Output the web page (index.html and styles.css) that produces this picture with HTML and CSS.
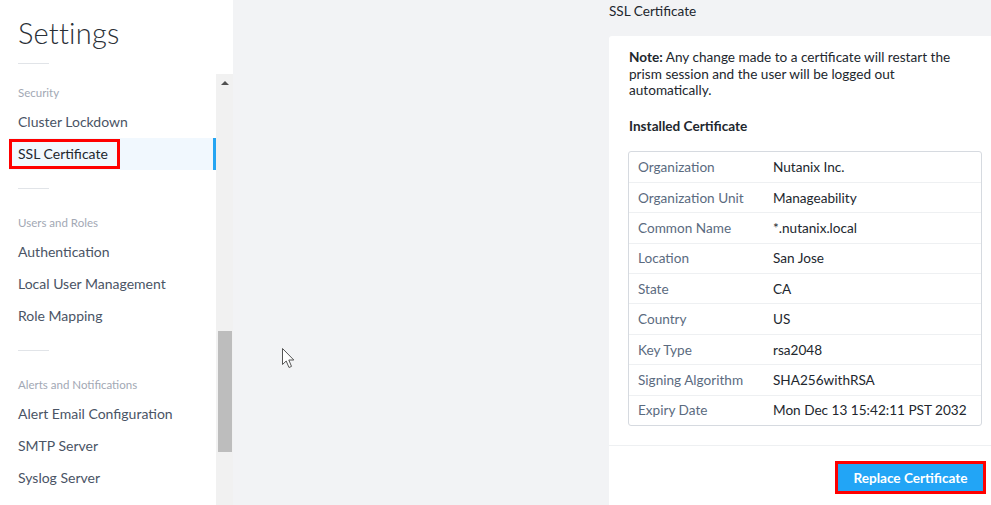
FILE: index.html
```html
<!DOCTYPE html>
<html>
<head>
<meta charset="utf-8">
<link rel="stylesheet" href="styles.css">
</head>
<body>
<div class="app">
  <aside class="sidebar">
    <div class="side-head">
      <h1 class="side-title">Settings</h1>
      <div class="rule"></div>
    </div>
    <div class="side-body">
      <nav class="side-list">
        <div class="group">
          <div class="group-label">Security</div>
          <a class="item">Cluster Lockdown</a>
          <a class="item selected"><span class="annot">SSL Certificate</span></a>
        </div>
        <div class="rule gap"></div>
        <div class="group">
          <div class="group-label">Users and Roles</div>
          <a class="item">Authentication</a>
          <a class="item">Local User Management</a>
          <a class="item">Role Mapping</a>
        </div>
        <div class="rule gap"></div>
        <div class="group">
          <div class="group-label">Alerts and Notifications</div>
          <a class="item">Alert Email Configuration</a>
          <a class="item">SMTP Server</a>
          <a class="item">Syslog Server</a>
        </div>
      </nav>
      <div class="scrollbar">
        <div class="sb-arrow"></div>
        <div class="sb-thumb"></div>
      </div>
    </div>
  </aside>
  <main class="main">
    <section class="content">
      <div class="page-title">SSL Certificate</div>
      <div class="card">
        <div class="card-body">
          <p class="note"><b>Note:</b> Any change made to a certificate will restart the prism session and the user will be logged out automatically.</p>
          <div class="sub-title">Installed Certificate</div>
          <div class="cert-table">
            <div class="row"><span class="k">Organization</span><span class="v">Nutanix Inc.</span></div>
            <div class="row"><span class="k">Organization Unit</span><span class="v">Manageability</span></div>
            <div class="row"><span class="k">Common Name</span><span class="v">*.nutanix.local</span></div>
            <div class="row"><span class="k">Location</span><span class="v">San Jose</span></div>
            <div class="row"><span class="k">State</span><span class="v">CA</span></div>
            <div class="row"><span class="k">Country</span><span class="v">US</span></div>
            <div class="row"><span class="k">Key Type</span><span class="v">rsa2048</span></div>
            <div class="row"><span class="k">Signing Algorithm</span><span class="v">SHA256withRSA</span></div>
            <div class="row"><span class="k">Expiry Date</span><span class="v">Mon Dec 13 15:42:11 PST 2032</span></div>
          </div>
        </div>
        <div class="card-foot">
          <button class="btn-primary">Replace Certificate</button>
        </div>
      </div>
    </section>
  </main>
  <svg class="cursor" width="14" height="21" viewBox="0 0 14 21"><path d="M0.5 0.5 L0.5 16.5 L4.2 13 L7 19.5 L9.5 18.4 L6.8 12 L11.8 12 Z" fill="#fff" stroke="#555" stroke-width="1"/></svg>
</div>
</body>
</html>
```
FILE: styles.css
```css
* { box-sizing: border-box; margin: 0; padding: 0; }
html, body { width: 991px; height: 505px; overflow: hidden; }
body {
  font-family: "Lato", "Open Sans", sans-serif;
  background: #f2f3f5;
  color: #22272e;
}
.app { display: flex; height: 505px; position: relative; }

.sidebar {
  width: 233px;
  background: #fff;
  display: flex;
  flex-direction: column;
  flex-shrink: 0;
}
.side-head { height: 74px; padding: 16px 0 0 18px; }
.side-title {
  font-size: 29px;
  font-weight: 300;
  line-height: 34px;
  color: #2a2f36;
  letter-spacing: 0.2px;
}
.rule { width: 31px; height: 1px; background: #e1e4e8; }
.side-head .rule { margin-top: 13px; }
.side-body { flex: 1; display: flex; min-height: 0; }
.side-list { width: 216px; padding-top: 11px; overflow: hidden; }
.rule.gap { margin: 18px 0 26px 18px; }
.group-label {
  height: 16px;
  line-height: 16px;
  font-size: 11.5px;
  color: #a2a8b4;
  padding-left: 18px;
  margin-bottom: 5px;
}
.item {
  display: block;
  height: 32px;
  line-height: 32px;
  font-size: 14px;
  color: #4a5465;
  padding-left: 18px;
}
.item.selected {
  margin-left: 9px;
  padding-left: 9px;
  background: #f1f8fe;
  border-right: 3px solid #26a5f2;
  color: #22272e;
}
.annot {
  display: inline-block;
  line-height: 24px;
  padding: 0 9px 0 6px;
  margin-left: -6px;
  margin-top: 4px;
  outline: 3px solid #f00;
  vertical-align: top;
}
.scrollbar { width: 17px; background: #f1f1f1; position: relative; }
.sb-arrow {
  width: 0; height: 0;
  margin: 7px auto 0;
  border-left: 4px solid transparent;
  border-right: 4px solid transparent;
  border-bottom: 4px solid #505050;
}
.sb-thumb {
  margin: 246px 1px 0 2px;
  height: 121px;
  background: #bdbdbd;
}

.main { flex: 1; display: flex; justify-content: flex-end; }
.content { width: 382px; display: flex; flex-direction: column; }
.page-title { font-size: 13.6px; line-height: 23px; height: 36px; color: #22272e; }
.card {
  flex: 1;
  background: #fff;
  border-top-left-radius: 3px;
  display: flex;
  flex-direction: column;
}
.card-body { padding: 13px 9px 19px 20px; border-bottom: 1px solid #eef0f2; }
.note { font-size: 13.6px; line-height: 16.5px; width: 345px; }
.note b { font-weight: 700; }
.sub-title { font-weight: 700; font-size: 13.6px; margin-top: 19px; line-height: 16px; margin-bottom: 17px; }
.cert-table {
  border: 1px solid #d6dae0;
  border-radius: 3px;
  margin-left: -1px;
}
.row {
  display: flex;
  height: 30.4px;
  align-items: center;
  font-size: 13.6px;
  border-top: 1px solid #eef0f2;
}
.row:first-child { border-top: none; }
.k { width: 144px; padding-left: 9px; color: #5b6b80; }
.v { color: #22272e; }
.card-foot { display: flex; justify-content: flex-end; padding: 18px 8px 0 0; }
.btn-primary {
  font-family: inherit;
  width: 145px;
  height: 27px;
  background: #22a5f6;
  border: none;
  color: #fff;
  font-size: 13.6px;
  font-weight: 700;
  outline: 3px solid #f00;
}
.cursor { position: absolute; left: 282px; top: 348px; }
```
